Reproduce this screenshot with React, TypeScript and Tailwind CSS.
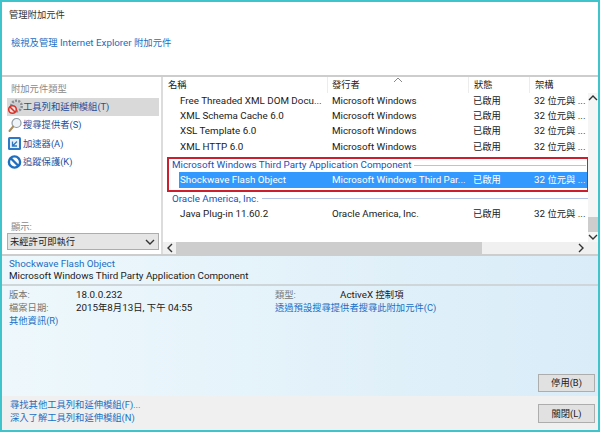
import React from 'react';

const font = { fontFamily: 'Roboto, "Noto Sans CJK TC", sans-serif' };

const rows = [
  { name: 'Free Threaded XML DOM Docu...', pub: 'Microsoft Windows' },
  { name: 'XML Schema Cache 6.0', pub: 'Microsoft Windows' },
  { name: 'XSL Template 6.0', pub: 'Microsoft Windows' },
  { name: 'XML HTTP 6.0', pub: 'Microsoft Windows' },
];

// CJK runs are set a bit smaller than the latin text, as in the original dialog
function Z({ children }: { children: React.ReactNode }) {
  return <span className="text-[9.3px]">{children}</span>;
}

function Row({ name, pub, selected }: { name: string; pub: string; selected?: boolean }) {
  return (
    <div className={`flex h-[15.33px] items-center leading-none whitespace-nowrap ${selected ? 'bg-[#3399ff] pl-px text-white' : 'text-[#1a1a1a]'}`}>
      <div className="w-[152px] shrink-0">{name}</div>
      <div className="w-[141px] shrink-0">{pub}</div>
      <div className="w-[61px] shrink-0"><Z>已啟用</Z></div>
      <div className="shrink-0">32 <Z>位元與</Z> ...</div>
    </div>
  );
}

function Group({ title }: { title: string }) {
  return (
    <div className="flex h-[12px] items-center gap-[3px] leading-none whitespace-nowrap text-[#1e50b4]">
      <span>{title}</span>
      <div className="h-px flex-1 bg-[#b4c3e6]" />
    </div>
  );
}

function GearIcon() {
  return (
    <svg width="16" height="16" viewBox="0 0 16 16" className="shrink-0">
      <circle cx="9.5" cy="7" r="5.2" fill="none" stroke="#8a8f96" strokeWidth="2.6" strokeDasharray="2 1.2" />
      <circle cx="9.5" cy="7" r="3.6" fill="#c9ccd0" />
      <circle cx="5.5" cy="10.5" r="3.8" fill="#f4e4e2" stroke="#d8322a" strokeWidth="1.6" />
      <path d="M3 8l5 5" stroke="#d8322a" strokeWidth="1.6" />
    </svg>
  );
}

function SearchIcon() {
  return (
    <svg width="16" height="16" viewBox="0 0 16 16" className="shrink-0">
      <circle cx="9.5" cy="6" r="4.5" fill="#eef4f8" stroke="#8f9aa3" strokeWidth="1.2" />
      <path d="M6.2 9.5L2.5 14" stroke="#a98c5c" strokeWidth="2" strokeLinecap="round" />
    </svg>
  );
}

function AccelIcon() {
  return (
    <svg width="16" height="16" viewBox="0 0 16 16" className="shrink-0">
      <rect x="1" y="1" width="13" height="13" rx="1.5" fill="#2f78c4" />
      <rect x="3" y="3" width="9" height="9" fill="#e8f1fa" />
      <path d="M10 10H5.5V5.5M5.5 10L10 5.5" fill="none" stroke="#2f78c4" strokeWidth="1.3" />
    </svg>
  );
}

function BlockIcon() {
  return (
    <svg width="16" height="16" viewBox="0 0 16 16" className="shrink-0">
      <circle cx="7.5" cy="8" r="5.6" fill="#fff" stroke="#1f6fc0" strokeWidth="2.4" />
      <path d="M3.5 4l8 8" stroke="#1f6fc0" strokeWidth="2.4" />
    </svg>
  );
}

function Chevron({ d }: { d: string }) {
  return (
    <svg width="10" height="10" viewBox="0 0 10 10" className="shrink-0">
      <path d={d} fill="none" stroke="#333" strokeWidth="1.4" />
    </svg>
  );
}

const categories = [
  { icon: <GearIcon />, label: '工具列和延伸模組(T)', active: true },
  { icon: <SearchIcon />, label: '搜尋提供者(S)' },
  { icon: <AccelIcon />, label: '加速器(A)' },
  { icon: <BlockIcon />, label: '追蹤保護(K)' },
];

export default function App() {
  return (
    <div style={font} className="flex h-[432px] w-[600px] flex-col overflow-hidden border-2 border-[#3fc4cc] bg-white text-[9.8px]">
      {/* Header */}
      <div className="h-[75px] shrink-0 border-b-2 border-[#cdcdcd]">
        <div className="pl-[7px] pt-[5px] leading-[15px] text-[#333]"><Z>管理附加元件</Z></div>
        <div className="pl-[9px] pt-[13px] leading-[15px] text-[#1a6fc4]">
          <Z>檢視及管理</Z> Internet Explorer <Z>附加元件</Z>
        </div>
      </div>

      {/* Main */}
      <div className="flex h-[179px] shrink-0 border-b-2 border-[#cdcdcd]">
        <div className="flex w-[161px] shrink-0 flex-col border-r-2 border-[#dcdcdc] pl-[5px] pr-[2px]">
          <div className="pl-[4px] pt-[5px] pb-[3px] leading-[13px] text-[#8a8a8a]"><Z>附加元件類型</Z></div>
          {categories.map((c) => (
            <div key={c.label} className={`flex h-[18.3px] items-center whitespace-nowrap text-[#1f4f9c] ${c.active ? 'bg-[#d9d9d9]' : ''}`}>
              {c.icon}
              <Z>{c.label}</Z>
            </div>
          ))}
          <div className="flex-1" />
          <div className="pl-[4px] leading-[13px] text-[#8a8a8a]"><Z>顯示:</Z></div>
          <div className="mb-[4px] flex h-[17px] items-center justify-between border border-[#adadad] bg-[#e5e5e5] pl-[2px] pr-[3px] text-[#222]">
            <Z>未經許可即執行</Z>
            <Chevron d="M1 3l4 4 4-4" />
          </div>
        </div>

        <div className="flex min-w-0 flex-1 flex-col">
          <div className="flex h-[16px] shrink-0 pl-[5px] text-[#222]">
            <div className="w-[160px] shrink-0 border-r border-[#ececec] leading-[16px]"><Z>名稱</Z></div>
            <div className="relative w-[141px] shrink-0 border-r border-[#ececec] pl-[4px] leading-[16px]">
              <Z>發行者</Z>
              <svg className="absolute left-[65px] top-[0px]" width="10" height="6" viewBox="0 0 10 6">
                <path d="M1 5l4-4 4 4" fill="none" stroke="#888" strokeWidth="1" />
              </svg>
            </div>
            <div className="w-[61px] shrink-0 border-r border-[#ececec] pl-[5px] leading-[16px]"><Z>狀態</Z></div>
            <div className="pl-[5px] leading-[16px]"><Z>架構</Z></div>
          </div>
          <div className="flex min-h-0 flex-1">
            <div className="flex min-w-0 flex-1 flex-col">
              <div className="pl-[17px]">
                {rows.map((r) => (
                  <Row key={r.name} name={r.name} pub={r.pub} />
                ))}
              </div>
              <div className="ml-[4px] mt-[3px] w-[422px] shrink-0 border-2 border-[#cc1f2e] pb-[2px]">
                <div className="pl-[3px] pr-[1px]">
                  <Group title="Microsoft Windows Third Party Application Component" />
                </div>
                <div className="pl-[10px] pt-[1px]">
                  <Row name="Shockwave Flash Object" pub="Microsoft Windows Third Par..." selected />
                </div>
              </div>
              <div className="pl-[9px] pt-[1px]">
                <Group title="Oracle America, Inc." />
              </div>
              <div className="pl-[17px] pt-[2px]">
                <Row name="Java Plug-in 11.60.2" pub="Oracle America, Inc." />
              </div>
            </div>
            <div className="flex w-[10px] shrink-0 flex-col items-center justify-between bg-[#f5f5f5]">
              <Chevron d="M1 7l4-4 4 4" />
              <div className="flex w-full flex-col items-center">
                <div className="h-[15px] w-full bg-[#cdcdcd]" />
                <Chevron d="M1 3l4 4 4-4" />
              </div>
            </div>
          </div>
          <div className="flex h-[12px] shrink-0 items-center bg-[#f0f0f0]">
            <div className="flex w-[13px] justify-center"><Chevron d="M7 1L3 5l4 4" /></div>
            <div className="h-full w-[306px] bg-[#cdcdcd]" />
            <div className="flex-1" />
            <Chevron d="M3 1l4 4-4 4" />
            <div className="w-[12px]" />
          </div>
        </div>
      </div>

      {/* Details */}
      <div className="flex h-[140px] shrink-0 flex-col bg-gradient-to-r from-[#eef8fc] to-[#d9ecf8] pl-[7px]">
        <div className="pt-[2px] leading-[12px] text-[#1a6fc4]">Shockwave Flash Object</div>
        <div className="leading-[12px] text-[#1a1a1a]">Microsoft Windows Third Party Application Component</div>
        <div className="-ml-[7px] mb-[2px] mt-[2px] h-[2px] bg-[#cfd6da]" />
        <div className="flex leading-[13px]">
          <div className="w-[67px] shrink-0 text-[#777]"><Z>版本:</Z></div>
          <div className="w-[199px] shrink-0 text-[#1a1a1a]">18.0.0.232</div>
          <div className="w-[65px] shrink-0 text-[#777]"><Z>類型:</Z></div>
          <div className="text-[#1a1a1a]">ActiveX <Z>控制項</Z></div>
        </div>
        <div className="flex leading-[13px]">
          <div className="w-[67px] shrink-0 text-[#777]"><Z>檔案日期:</Z></div>
          <div className="w-[199px] shrink-0 text-[#1a1a1a]">2015<Z>年</Z>8<Z>月</Z>13<Z>日</Z>, <Z>下午</Z> 04:55</div>
          <div className="text-[#1a6fc4]"><Z>透過預設搜尋提供者搜尋此附加元件(C)</Z></div>
        </div>
        <div className="leading-[13px] text-[#1a6fc4]"><Z>其他資訊(R)</Z></div>
        <div className="flex flex-1 items-end justify-end pb-[4px] pr-[3px]">
          <button className="h-[18px] w-[57px] border border-[#adadad] bg-[#e1e1e1] leading-none text-[#222]"><Z>停用(B)</Z></button>
        </div>
      </div>

      {/* Footer */}
      <div className="flex flex-1 items-start justify-between bg-[#f0f0f0] pl-[8px] pr-[3px]">
        <div className="pt-[2px] leading-[13px] text-[#1a6fc4]">
          <div><Z>尋找其他工具列和延伸模組(F)...</Z></div>
          <div><Z>深入了解工具列和延伸模組(N)</Z></div>
        </div>
        <button className="mt-[8px] h-[19px] w-[57px] border border-[#adadad] bg-[#e1e1e1] leading-none text-[#222]"><Z>關閉(L)</Z></button>
      </div>
    </div>
  );
}
